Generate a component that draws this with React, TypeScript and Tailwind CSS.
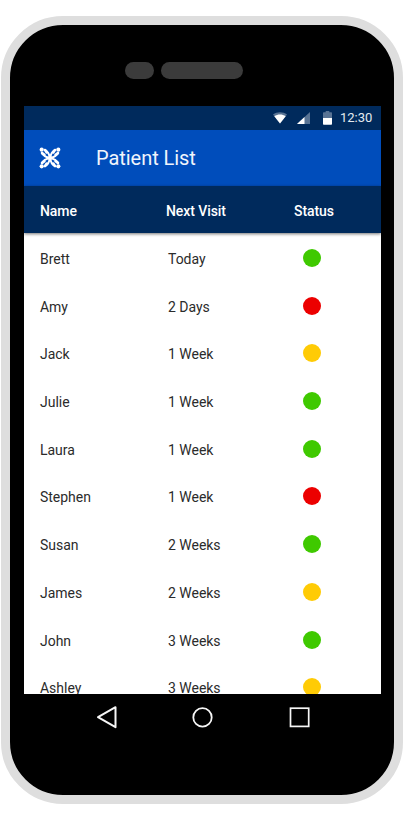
type Status = "good" | "alert" | "warn";

const patients: { name: string; visit: string; status: Status }[] = [
  { name: "Brett", visit: "Today", status: "good" },
  { name: "Amy", visit: "2 Days", status: "alert" },
  { name: "Jack", visit: "1 Week", status: "warn" },
  { name: "Julie", visit: "1 Week", status: "good" },
  { name: "Laura", visit: "1 Week", status: "good" },
  { name: "Stephen", visit: "1 Week", status: "alert" },
  { name: "Susan", visit: "2 Weeks", status: "good" },
  { name: "James", visit: "2 Weeks", status: "warn" },
  { name: "John", visit: "3 Weeks", status: "good" },
  { name: "Ashley", visit: "3 Weeks", status: "warn" },
];

const dotColor: Record<Status, string> = {
  good: "bg-[#3fc900]",
  alert: "bg-[#ec0000]",
  warn: "bg-[#ffcb05]",
};

function Logo() {
  return (
    <svg width="22" height="22" viewBox="-11 -11 22 22" fill="none" stroke="#fff" strokeLinecap="round">
      {[0, 90, 180, 270].map((angle) => (
        <g key={angle} transform={`rotate(${angle})`}>
          <path d="M0.4 -0.4C0.6 -4 2 -6.6 5.2 -8.2" strokeWidth="2" />
          <path d="M0.4 -0.4C4 -0.6 6.6 -2 8.2 -5.2" strokeWidth="2" />
          <path d="M4.9 -7.9L3.3 -5.6" strokeWidth="2.6" />
          <path d="M7.9 -4.9L5.6 -3.3" strokeWidth="2.6" />
          <circle cx="8.3" cy="-8.3" r="2.1" fill="#fff" stroke="none" />
        </g>
      ))}
    </svg>
  );
}

function StatusBar() {
  return (
    <div className="flex h-6 shrink-0 items-center bg-[#002a5c] pl-[249px]">
      <svg width="14" height="12" viewBox="0 0 14 12">
        <path d="M0 2.6C4 -.6 10 -.6 14 2.6L7 11.6Z" fill="#587394" />
        <path d="M1.3 4.2C4.8 1.9 9.2 1.9 12.7 4.2L7 11.6Z" fill="#fff" />
      </svg>
      <svg className="ml-[10px]" width="13" height="12" viewBox="0 0 13 12">
        <path d="M13 0V12H0Z" fill="#587394" />
        <path d="M7.5 5V12H0Z" fill="#fff" />
      </svg>
      <svg className="ml-[13px]" width="9" height="14" viewBox="0 0 9 14">
        <path d="M2.7 0h3.6v1.3H8c.6 0 1 .4 1 1V7H0V2.3c0-.6.4-1 1-1h1.7Z" fill="#587394" />
        <path d="M0 7h9v5.8c0 .6-.4 1-1 1H1c-.6 0-1-.4-1-1Z" fill="#fff" />
      </svg>
      <span className="ml-2 text-[13px] leading-6 text-[#e4eaf0]">12:30</span>
    </div>
  );
}

function NavBar() {
  return (
    <nav className="flex items-center gap-[73px] pt-[11.5px] pl-[85px] text-[#f6f6f6]">
      <svg width="24" height="24" viewBox="0 0 24 24" fill="none" stroke="currentColor" strokeWidth="2" strokeLinejoin="round">
        <path d="M3 12.2L20.5 2.2V22.2Z" />
      </svg>
      <svg width="24" height="24" viewBox="0 0 24 24" fill="none" stroke="currentColor" strokeWidth="1.8">
        <circle cx="10.5" cy="12.4" r="9.2" />
      </svg>
      <svg width="24" height="24" viewBox="0 0 24 24" fill="none" stroke="currentColor" strokeWidth="1.7">
        <rect x="1.5" y="3.2" width="18.2" height="18.2" />
      </svg>
    </nav>
  );
}

export default function App() {
  return (
    <div className="flex h-[820px] w-[404px] flex-col bg-white pt-4 pl-px font-['Roboto',sans-serif]">
      <div className="flex h-[788px] w-[402px] flex-col rounded-[62px] border-[9px] border-[#dedede] bg-black">
        <div className="flex h-[81px] shrink-0 gap-[7px] pt-[37px] pl-[115px]">
          <div className="h-[17px] w-[29px] rounded-full bg-[#3b3b3b]" />
          <div className="h-[17px] w-[82px] rounded-full bg-[#3b3b3b]" />
        </div>
        <div className="ml-[14px] flex h-[587.5px] w-[357px] shrink-0 flex-col overflow-hidden bg-white">
          <StatusBar />
          <header className="flex h-[55.5px] shrink-0 items-center bg-[#004dbb] pl-[15px]">
            <Logo />
            <h1 className="ml-[35px] text-[20px] leading-6 tracking-[-0.05px] text-[#f0f5fc]">Patient List</h1>
          </header>
          <div className="z-10 grid h-[47.5px] shrink-0 grid-cols-[126px_128px_1fr] items-center bg-[#002a5c] pt-[4px] pl-4 text-[14px] font-medium tracking-[-0.08px] text-white shadow-[0_1px_3px_rgba(0,0,0,0.55)]">
            <span>Name</span>
            <span>Next Visit</span>
            <span>Status</span>
          </div>
          <div className="pt-[1.2px]">
            {patients.map((p) => (
              <div
                key={p.name}
                className="grid h-[47.7px] grid-cols-[128px_135.4px_1fr] items-center pl-4 text-[14px] tracking-[-0.02px] text-[#2b2b2b]"
              >
                <span className="pt-[3px]">{p.name}</span>
                <span className="pt-[3px]">{p.visit}</span>
                <span className={`h-[18px] w-[18px] rounded-full ${dotColor[p.status]}`} />
              </div>
            ))}
          </div>
        </div>
        <NavBar />
      </div>
    </div>
  );
}
